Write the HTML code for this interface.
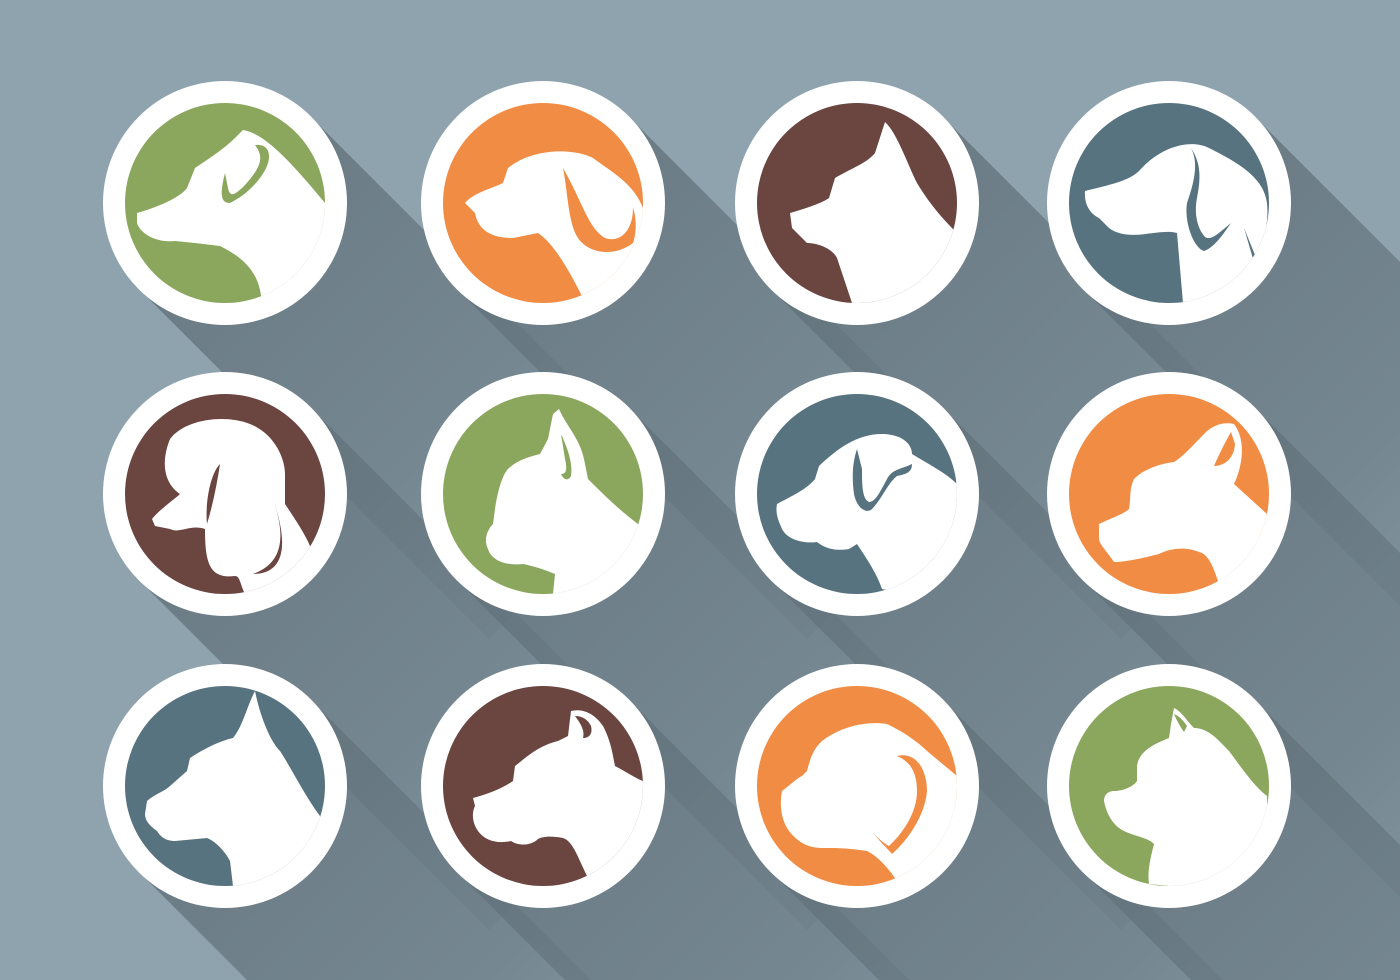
<!DOCTYPE html>
<html><head><meta charset="utf-8"><style>html,body{margin:0;padding:0;background:#8fa3ae;overflow:hidden;width:1400px;height:980px}svg{display:block;position:absolute;left:0;top:0}</style></head>
<body>
<svg width="1400" height="980" viewBox="0 0 1400 980" xmlns="http://www.w3.org/2000/svg" overflow="hidden">
<defs>
<linearGradient id="sh" x1="0" y1="0" x2="1" y2="1" gradientUnits="objectBoundingBox">
<stop offset="0" stop-color="#5f6e77" stop-opacity="0.85"/>
<stop offset="0.6" stop-color="#6a7b85" stop-opacity="0.7"/>
<stop offset="1" stop-color="#7a8c96" stop-opacity="0.3"/>
</linearGradient>
<clipPath id="c"><circle cx="0" cy="0" r="100"/></clipPath>
<g id="shadow"><polygon points="86,-86 436,264 264,436 -86,86" fill="url(#sh)"/></g>
</defs>
<rect width="1400" height="980" fill="#8fa3ae"/>
<g>
<use href="#shadow" x="225" y="203"/><use href="#shadow" x="543" y="203"/><use href="#shadow" x="857" y="203"/><use href="#shadow" x="1169" y="203"/>
<use href="#shadow" x="225" y="494"/><use href="#shadow" x="543" y="494"/><use href="#shadow" x="857" y="494"/><use href="#shadow" x="1169" y="494"/>
<use href="#shadow" x="225" y="786"/><use href="#shadow" x="543" y="786"/><use href="#shadow" x="857" y="786"/><use href="#shadow" x="1169" y="786"/>
</g>

<g transform="translate(225,203)"><circle r="122" fill="#fff"/><circle r="100" fill="#8ba75e"/>
<g clip-path="url(#c)"><path fill="#fff" d="M-88,10 C-70,5 -45,-5 -38,-15 L-30,-35 C-15,-45 0,-55 10,-65 L18,-73 C35,-70 55,-55 100,0 L100,110 L37,100 C35,80 30,60 -5,43 L-30,40 L-50,38 C-70,40 -85,30 -88,20 Z"/>
<path fill="#8ba75e" d="M30,-58 C45,-60 50,-45 35,-25 C25,-12 15,-5 5,0 C-5,0 -5,-10 0,-30 L3,-15 C5,-5 10,-8 20,-18 C35,-35 40,-45 30,-58Z"/></g></g>
<g transform="translate(543,203)"><circle r="122" fill="#fff"/><circle r="100" fill="#f08c44"/>
<g clip-path="url(#c)"><path fill="#fff" d="M-78,0 C-70,-10 -50,-15 -40,-20 L-35,-35 C-10,-55 30,-55 50,-45 C70,-30 90,-20 100,5 L100,110 L40,95 C25,65 10,40 -5,30 L-30,35 C-55,35 -65,25 -68,10 Z"/>
<path fill="#f08c44" d="M20,-35 C25,-10 25,20 35,35 C45,50 70,55 90,40 C95,25 92,10 90,5 C90,30 75,40 62,35 C45,25 40,0 20,-35Z"/></g></g>
<g transform="translate(857,203)"><circle r="122" fill="#fff"/><circle r="100" fill="#6b4540"/>
<g clip-path="url(#c)"><path fill="#fff" d="M-67,10 C-50,5 -35,0 -28,-5 L-22,-25 C-5,-35 10,-40 18,-50 L28,-81 C40,-70 50,-40 60,-20 C75,5 90,20 100,30 L100,110 L-5,100 L-20,55 C-25,45 -40,40 -50,40 L-65,25 Z"/></g></g>
<g transform="translate(1169,203)"><circle r="122" fill="#fff"/><circle r="100" fill="#577380"/>
<g clip-path="url(#c)"><path fill="#fff" d="M-84,-12 C-60,-18 -40,-22 -30,-32 C-10,-55 20,-65 40,-55 C70,-40 95,-25 98,0 C100,20 95,40 86,52 L75,25 L100,110 L14,100 L8,30 C-10,25 -40,40 -60,25 L-70,15 C-80,10 -85,0 -84,-12 Z"/>
<path fill="#577380" d="M22,-55 C30,-40 25,-20 18,0 C15,20 25,45 35,48 C45,45 55,30 62,20 C50,30 42,38 36,34 C28,25 25,10 28,-5 C32,-25 32,-40 22,-55Z"/></g></g>

<g transform="translate(225,494)"><circle r="122" fill="#fff"/><circle r="100" fill="#6b4540"/>
<g clip-path="url(#c)"><path fill="#fff" d="M-73,25 C-65,15 -50,5 -45,0 C-60,-10 -65,-30 -55,-55 C-40,-75 0,-80 25,-70 C50,-60 60,-35 60,-20 L60,10 C70,25 80,40 85,52 L100,110 L20,100 C15,90 15,82 10,82 C-15,85 -20,70 -20,35 C-35,30 -45,40 -55,35 L-70,32 Z"/>
<path fill="#6b4540" d="M-5,-30 C-15,-20 -20,10 -18,30 C-12,10 -8,-10 -5,-30Z M40,-15 C55,20 70,65 28,80 C60,80 68,50 40,-15Z"/></g></g>
<g transform="translate(543,494)"><circle r="122" fill="#fff"/><circle r="100" fill="#8ba75e"/>
<g clip-path="url(#c)"><path fill="#fff" d="M-55,55 C-60,45 -55,35 -50,30 L-48,15 C-45,-5 -40,-20 -35,-25 C-25,-35 -10,-38 -3,-40 L5,-55 L10,-80 L16,-85 C25,-65 38,-55 42,-30 L45,-15 C60,0 75,15 95,30 L100,110 L10,100 L12,80 C0,75 -10,72 -20,70 C-40,72 -52,65 -55,55Z"/>
<path fill="#8ba75e" d="M18,-60 C25,-45 30,-30 28,-18 C25,-12 20,-15 18,-20 C22,-20 25,-22 22,-35 Z"/></g></g>
<g transform="translate(857,494)"><circle r="122" fill="#fff"/><circle r="100" fill="#577380"/>
<g clip-path="url(#c)"><path fill="#fff" d="M-80,10 C-65,2 -50,-5 -42,-15 L-38,-28 C-20,-45 0,-60 25,-60 C45,-60 55,-50 55,-40 C75,-28 90,-20 100,-10 L100,110 L25,95 C20,80 10,65 0,50 L-8,55 C-25,58 -35,52 -40,48 C-55,50 -70,45 -75,35 C-78,28 -82,20 -80,10Z"/>
<path fill="#577380" d="M0,-45 C-5,-30 -5,-15 -3,0 C0,15 10,20 15,15 C25,5 30,-10 40,-18 C50,-20 55,-22 55,-30 C45,-25 35,-25 30,-15 C22,0 18,8 12,8 C5,5 5,-10 5,-25 Z"/></g></g>
<g transform="translate(1169,494)"><circle r="122" fill="#fff"/><circle r="100" fill="#f08c44"/>
<g clip-path="url(#c)"><path fill="#fff" d="M-70,30 C-60,25 -45,20 -40,15 C-38,5 -40,-5 -35,-15 C-25,-25 -10,-30 5,-32 C15,-38 25,-50 35,-60 C45,-70 55,-72 65,-70 C80,-50 70,-20 65,-10 L98,20 L100,110 L50,90 C45,75 40,60 30,58 C15,52 0,55 -10,60 C-30,65 -45,68 -55,68 C-60,60 -70,50 -70,45 Z"/>
<path fill="#f08c44" d="M62,-62 C55,-50 48,-35 45,-28 C55,-28 65,-35 66,-50 Z"/></g></g>

<g transform="translate(225,786)"><circle r="122" fill="#fff"/><circle r="100" fill="#577380"/>
<g clip-path="url(#c)"><path fill="#fff" d="M-78,15 C-70,8 -60,5 -55,0 L-38,-15 L-35,-28 C-20,-38 -5,-45 8,-48 C18,-60 22,-80 30,-95 C35,-70 45,-45 55,-35 C65,-20 80,10 95,30 L100,110 L8,100 L5,75 C0,65 -10,55 -18,52 L-50,55 C-60,55 -65,50 -68,45 C-75,40 -80,35 -80,28 Z"/></g></g>
<g transform="translate(543,786)"><circle r="122" fill="#fff"/><circle r="100" fill="#6b4540"/>
<g clip-path="url(#c)"><path fill="#fff" d="M-70,12 C-55,8 -40,2 -30,-5 L-28,-20 C-15,-30 -5,-40 15,-45 L25,-50 L28,-75 C40,-78 52,-72 60,-60 C68,-45 70,-30 72,-20 C82,-15 92,-8 100,-5 L100,110 L45,92 C35,72 30,55 20,52 C10,50 0,50 -5,53 C-12,60 -25,60 -32,55 C-45,58 -58,55 -65,45 C-70,38 -72,28 -68,20 Z"/>
<path fill="#6b4540" d="M32,-70 C38,-62 42,-55 40,-48 C46,-48 50,-52 48,-60 C45,-66 40,-70 32,-70Z"/></g></g>
<g transform="translate(857,786)"><circle r="122" fill="#fff"/><circle r="100" fill="#f08c44"/>
<g clip-path="url(#c)"><path fill="#fff" d="M-75,5 C-68,0 -60,-8 -55,-10 L-50,-15 C-45,-35 -40,-40 -35,-45 C-15,-60 10,-65 30,-62 C45,-55 60,-45 70,-35 L100,-10 L100,110 L40,95 C30,80 20,70 10,65 C-10,62 -20,62 -35,62 C-50,62 -60,55 -68,45 C-75,35 -78,22 -75,5Z"/>
<path fill="#f08c44" d="M40,-30 C60,-35 70,-15 70,5 C68,30 50,55 35,68 C30,62 22,55 15,45 C20,52 28,58 32,60 C48,45 60,25 60,5 C60,-15 52,-25 40,-30Z"/></g></g>
<g transform="translate(1169,786)"><circle r="122" fill="#fff"/><circle r="100" fill="#8ba75e"/>
<g clip-path="url(#c)"><path fill="#fff" d="M-65,15 C-65,8 -60,5 -55,5 C-45,5 -35,0 -32,-5 L-32,-20 C-30,-35 -15,-42 0,-48 L2,-62 L5,-78 C12,-75 18,-65 25,-58 C40,-58 50,-45 60,-35 C75,-15 85,0 98,10 L100,110 L-20,98 C-22,85 -18,70 -15,58 C-20,52 -35,50 -45,45 C-55,40 -62,30 -65,15Z"/>
<path fill="#8ba75e" d="M5,-72 C8,-65 12,-58 15,-54 L18,-60 C14,-66 10,-70 5,-72Z"/></g></g>
</svg>
</body></html>
